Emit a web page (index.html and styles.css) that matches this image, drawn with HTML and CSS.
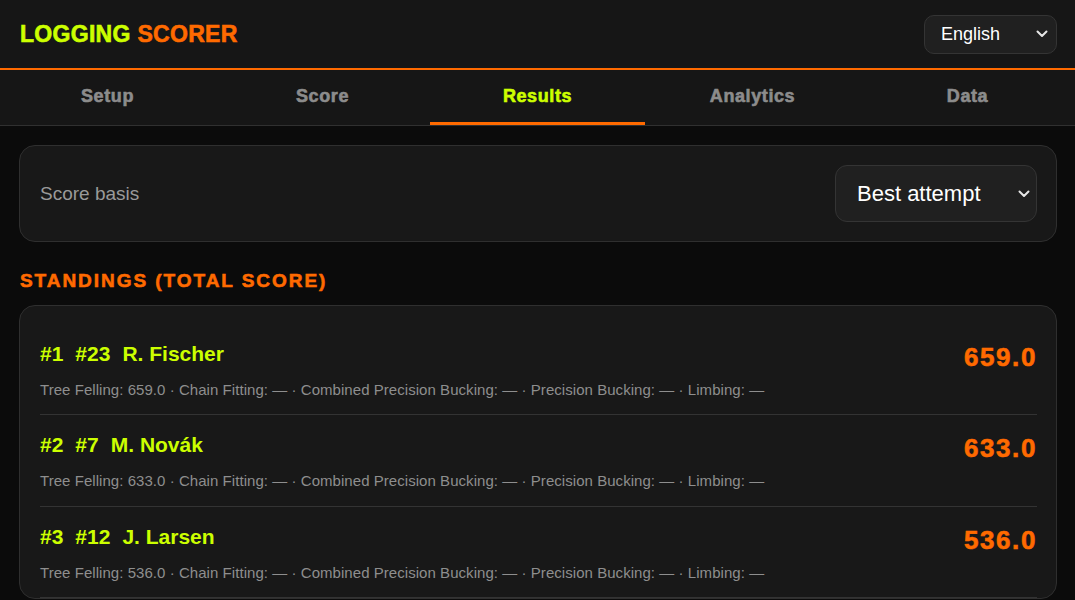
FILE: index.html
```html
<!DOCTYPE html>
<html lang="en">
<head>
    <meta charset="UTF-8">
    <meta name="viewport" content="width=device-width, initial-scale=1.0">
    <title>Logging Scorer</title>
    <link rel="stylesheet" href="styles.css">
</head>
<body>
    <header class="topbar">
        <div class="brand"><span class="brand-a">LOGGING</span> <span class="brand-b">SCORER</span></div>
        <div class="select-wrap lang">
            <select class="select">
                <option>English</option>
            </select>
            <svg class="chev" width="12" height="8" viewBox="0 0 12 8"><path d="M1.5 1.5 6 6l4.5-4.5" fill="none" stroke="currentColor" stroke-width="2" stroke-linecap="round" stroke-linejoin="round"/></svg>
        </div>
    </header>

    <nav class="tabs">
        <a class="tab">Setup</a>
        <a class="tab">Score</a>
        <a class="tab active">Results</a>
        <a class="tab">Analytics</a>
        <a class="tab">Data</a>
    </nav>

    <main class="main">
        <section class="card basis">
            <label class="basis-label">Score basis</label>
            <div class="select-wrap big">
                <select class="select">
                    <option>Best attempt</option>
                </select>
                <svg class="chev" width="12" height="8" viewBox="0 0 12 8"><path d="M1.5 1.5 6 6l4.5-4.5" fill="none" stroke="currentColor" stroke-width="2" stroke-linecap="round" stroke-linejoin="round"/></svg>
            </div>
        </section>

        <h2 class="section-title">STANDINGS (TOTAL SCORE)</h2>

        <section class="card standings">
            <div class="row">
                <div class="row-info">
                    <div class="row-name"><span>#1</span><span>#23</span><span>R. Fischer</span></div>
                    <div class="row-detail">Tree Felling: 659.0 · Chain Fitting: — · Combined Precision Bucking: — · Precision Bucking: — · Limbing: —</div>
                </div>
                <div class="row-total">659.0</div>
            </div>
            <div class="row">
                <div class="row-info">
                    <div class="row-name"><span>#2</span><span>#7</span><span>M. Novák</span></div>
                    <div class="row-detail">Tree Felling: 633.0 · Chain Fitting: — · Combined Precision Bucking: — · Precision Bucking: — · Limbing: —</div>
                </div>
                <div class="row-total">633.0</div>
            </div>
            <div class="row">
                <div class="row-info">
                    <div class="row-name"><span>#3</span><span>#12</span><span>J. Larsen</span></div>
                    <div class="row-detail">Tree Felling: 536.0 · Chain Fitting: — · Combined Precision Bucking: — · Precision Bucking: — · Limbing: —</div>
                </div>
                <div class="row-total">536.0</div>
            </div>
        </section>
    </main>
</body>
</html>
```

FILE: styles.css
```css
* {
    margin: 0;
    padding: 0;
    box-sizing: border-box;
}

body {
    font-family: "Liberation Sans", Arial, sans-serif;
    background: #0b0b0b;
    color: #f2f2f2;
    overflow: hidden;
}

/* heavy display type used for brand, tabs, headings and totals */
.brand,
.tab,
.section-title,
.row-total {
    font-family: "Liberation Sans", Arial, sans-serif;
    font-weight: 900;
    -webkit-text-stroke: 0.6px currentColor;
}

.topbar {
    height: 70px;
    display: flex;
    align-items: center;
    justify-content: space-between;
    padding: 0 18px 0 20px;
    background: #161616;
    border-bottom: 2px solid #ff6a00;
}

.brand {
    font-size: 23px;
    letter-spacing: 0.3px;
    padding-top: 1px;
}

.brand-a {
    color: #ccff00;
}

.brand-b {
    color: #ff6a00;
}

.select-wrap {
    position: relative;
    display: inline-block;
}

.select {
    appearance: none;
    -webkit-appearance: none;
    font-family: "Liberation Sans", Arial, sans-serif;
    color: #fff;
    background: #202020;
    border: 1px solid #343434;
    outline: none;
}

.chev {
    position: absolute;
    top: 50%;
    right: 9px;
    margin-top: -4px;
    color: #e6e6e6;
    pointer-events: none;
}

.lang .select {
    width: 133px;
    height: 39px;
    padding: 0 16px;
    font-size: 18px;
    border-radius: 10px;
}

.tabs {
    display: grid;
    grid-template-columns: repeat(5, 1fr);
    height: 56px;
    background: #161616;
    border-bottom: 1px solid #303030;
}

.tab {
    display: flex;
    align-items: center;
    justify-content: center;
    font-size: 18px;
    letter-spacing: 0.6px;
    color: #8c8c8c;
    border-bottom: 3px solid transparent;
}

.tab.active {
    color: #ccff00;
    border-bottom-color: #ff6a00;
}

.main {
    padding: 19px 18px 0 19px;
}

.card {
    background: #181818;
    border: 1px solid #2f2f2f;
    border-radius: 16px;
}

.basis {
    height: 97px;
    display: flex;
    align-items: center;
    justify-content: space-between;
    padding: 0 19px 0 20px;
}

.basis-label {
    font-size: 19px;
    color: #9a9a9a;
}

.big .select {
    width: 202px;
    height: 57px;
    padding: 0 21px;
    font-size: 22px;
    border-radius: 12px;
}

.big .chev {
    right: 7px;
}

.section-title {
    font-size: 19px;
    letter-spacing: 1.95px;
    color: #ff6a00;
    margin: 28px 0 13px 1px;
}

.standings {
    padding: 18px 19px 0 20px;
}

.row {
    display: flex;
    justify-content: space-between;
    align-items: flex-start;
    padding: 18px 0 15px;
    border-bottom: 1px solid #333;
}

.row:nth-child(2) {
    padding-bottom: 16px;
}

.row-name {
    display: flex;
    gap: 12px;
    font-size: 21px;
    font-weight: 700;
    color: #ccff00;
    line-height: 24px;
}

.row-detail {
    margin-top: 15px;
    font-size: 15px;
    line-height: 18px;
    letter-spacing: 0.05px;
    color: #8e8e8e;
}

.row-total {
    font-size: 26px;
    line-height: 30px;
    letter-spacing: 1.6px;
    color: #ff6a00;
}
```
